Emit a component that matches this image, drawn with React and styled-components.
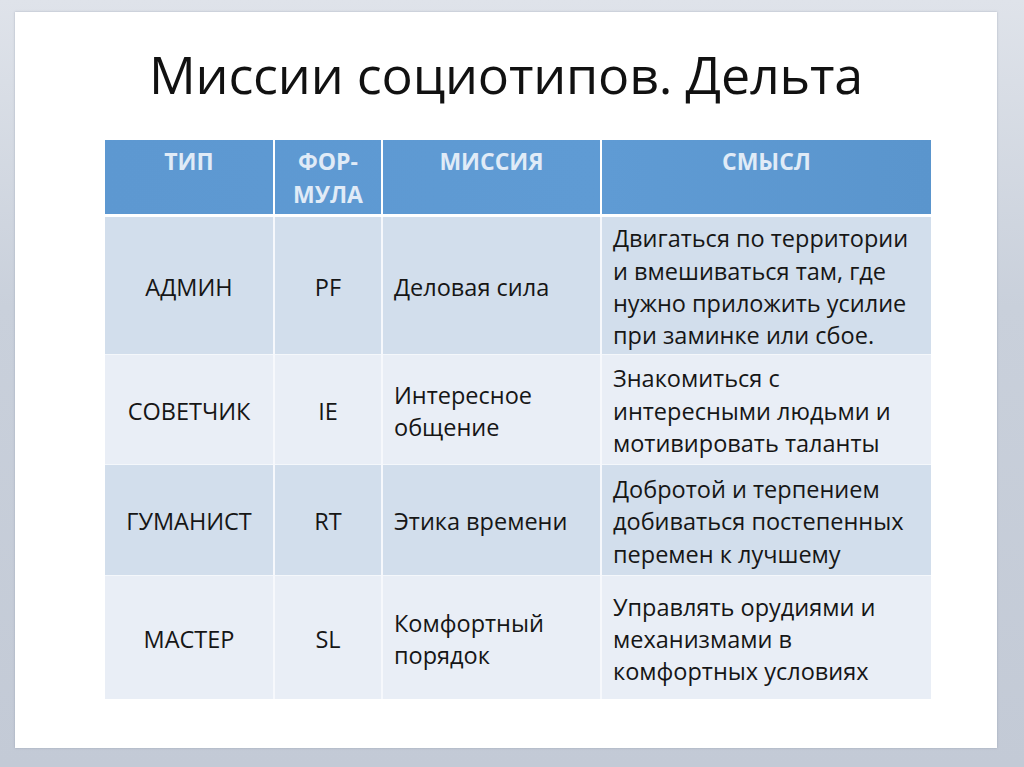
import React from "react";
import styled, { createGlobalStyle } from "styled-components";

const GlobalStyle = createGlobalStyle`
  html, body {
    margin: 0;
    padding: 0;
  }
  body {
    width: 1024px;
    height: 767px;
    overflow: hidden;
    font-family: "Open Sans", "Noto Sans", sans-serif;
    background: linear-gradient(180deg, #dfe3ea 0%, #c9d0db 40%, #c3cad6 100%);
  }
`;

const Frame = styled.div`
  box-sizing: border-box;
  width: 1024px;
  height: 767px;
  padding: 12px 27px 19px 15px;
`;

const Slide = styled.div`
  box-sizing: border-box;
  height: 100%;
  background: #ffffff;
  box-shadow: 0 0 2px rgba(120, 130, 150, 0.5);
  display: flex;
  flex-direction: column;
`;

const Title = styled.h1`
  margin: 0;
  padding-top: 27px;
  height: 92px;
  box-sizing: border-box;
  text-align: center;
  font-size: 52px;
  line-height: 70px;
  font-weight: 400;
  color: #111111;
  letter-spacing: -0.2px;
`;

const Table = styled.table`
  margin-left: 90px;
  margin-top: 36px;
  width: 826px;
  border-collapse: collapse;
  table-layout: fixed;
`;

const HeadRow = styled.tr`
  height: 75px;
  background: linear-gradient(90deg, #5d98d1 0%, #5f9bd4 60%, #5a95cd 100%);
  border-bottom: 3px solid #ffffff;
`;

const HeadCell = styled.th`
  vertical-align: top;
  text-align: center;
  padding: 5px 4px 0;
  font-size: 23px;
  line-height: 33px;
  font-weight: 700;
  color: #e0ebf7;
  border-left: 2px solid #ffffff;
  &:first-child {
    border-left: none;
  }
`;

const Row = styled.tr`
  height: ${({ $h }) => $h}px;
  background: ${({ $dark }) => ($dark ? "#d2deec" : "#e9eef6")};
  border-top: 1px solid #f4f7fb;
`;

const Cell = styled.td`
  vertical-align: middle;
  text-align: ${({ $left }) => ($left ? "left" : "center")};
  padding: ${({ $left }) => ($left ? "4px 4px 0 11px" : "4px 4px 0")};
  font-size: 23.5px;
  line-height: 32.4px;
  color: #161616;
  border-left: 2px solid #f6f8fc;
  &:first-child {
    border-left: none;
  }
`;

const columns = [169, 108, 219, 330];

const rows = [
  {
    type: "АДМИН",
    formula: "PF",
    mission: ["Деловая сила"],
    sense: [
      "Двигаться по территории",
      "и вмешиваться там, где",
      "нужно приложить усилие",
      "при заминке или сбое.",
    ],
    height: 139,
    dark: true,
  },
  {
    type: "СОВЕТЧИК",
    formula: "IE",
    mission: ["Интересное", "общение"],
    sense: ["Знакомиться с", "интересными людьми и", "мотивировать таланты"],
    height: 110,
    dark: false,
  },
  {
    type: "ГУМАНИСТ",
    formula: "RT",
    mission: ["Этика времени"],
    sense: ["Добротой и терпением", "добиваться постепенных", "перемен к лучшему"],
    height: 111,
    dark: true,
  },
  {
    type: "МАСТЕР",
    formula: "SL",
    mission: ["Комфортный", "порядок"],
    sense: ["Управлять орудиями и", "механизмами в", "комфортных условиях"],
    height: 124,
    dark: false,
  },
];

const Lines = ({ lines }) =>
  lines.map((line, i) => (
    <React.Fragment key={i}>
      {i > 0 && <br />}
      {line}
    </React.Fragment>
  ));

const App = () => {
  return (
    <>
      <GlobalStyle />
      <Frame>
        <Slide>
          <Title>Миссии социотипов. Дельта</Title>
          <Table>
            <colgroup>
              {columns.map((w, i) => (
                <col key={i} style={{ width: w }} />
              ))}
            </colgroup>
            <thead>
              <HeadRow>
                <HeadCell>ТИП</HeadCell>
                <HeadCell>
                  ФОР-
                  <br />
                  МУЛА
                </HeadCell>
                <HeadCell>МИССИЯ</HeadCell>
                <HeadCell>СМЫСЛ</HeadCell>
              </HeadRow>
            </thead>
            <tbody>
              {rows.map((r) => (
                <Row key={r.type} $h={r.height} $dark={r.dark}>
                  <Cell>{r.type}</Cell>
                  <Cell>{r.formula}</Cell>
                  <Cell $left>
                    <Lines lines={r.mission} />
                  </Cell>
                  <Cell $left>
                    <Lines lines={r.sense} />
                  </Cell>
                </Row>
              ))}
            </tbody>
          </Table>
        </Slide>
      </Frame>
    </>
  );
};

export default App;
